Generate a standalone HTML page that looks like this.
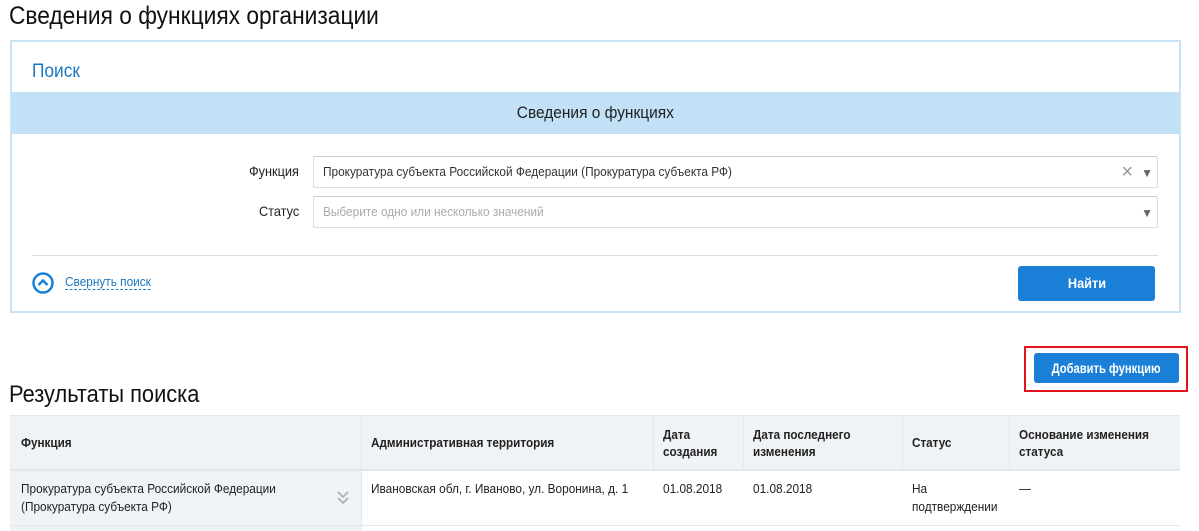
<!DOCTYPE html>
<html><head><meta charset="utf-8"><style>
*{box-sizing:border-box;margin:0;padding:0}
body{width:1199px;height:531px;overflow:hidden;background:#fff;font-family:"Liberation Sans",sans-serif;color:#222;position:relative}
.a{position:absolute}
.x{transform:scaleX(.91);transform-origin:left top;white-space:nowrap}
.s{display:inline-block;transform:scaleX(.91);transform-origin:left center;white-space:nowrap}
.h{font-size:13px;font-weight:bold;line-height:17px;transform:scaleX(.9);transform-origin:left top;white-space:nowrap}
.b{font-size:13px;line-height:18px;transform:scaleX(.91);transform-origin:left top;white-space:nowrap}
</style></head><body>
<div class="a x" style="left:9px;top:2px;font-size:25px;color:#111">Сведения о функциях организации</div>
<div class="a" style="left:10px;top:40px;width:1171px;height:273px;border:2px solid #c8e2f6"></div>
<div class="a x" style="left:32px;top:61px;font-size:19px;color:#1a77c2">Поиск</div>
<div class="a" style="left:12px;top:92px;width:1167px;height:42px;background:#c2e0f6;text-align:center;line-height:42px;font-size:17px;color:#222"><span class="s" style="transform-origin:center">Сведения о функциях</span></div>
<div class="a" style="left:200px;top:163px;width:99px;text-align:right;font-size:14px"><span class="s" style="transform-origin:right center">Функция</span></div>
<div class="a" style="left:313px;top:156px;width:845px;height:32px;border:1px solid #ddd;border-top-color:#ccc;border-radius:2px;font-size:13px;line-height:30px;padding-left:9px;color:#333"><span class="s">Прокуратура субъекта Российской Федерации (Прокуратура субъекта РФ)</span>
<span class="a" style="right:24px;top:0;color:#999;font-size:20px">×</span><span class="a" style="right:4px;top:1px;color:#666;font-size:12px">▼</span></div>
<div class="a" style="left:200px;top:203px;width:99px;text-align:right;font-size:14px"><span class="s" style="transform-origin:right center">Статус</span></div>
<div class="a" style="left:313px;top:196px;width:845px;height:32px;border:1px solid #ddd;border-top-color:#ccc;border-radius:2px;font-size:13px;line-height:30px;padding-left:9px;color:#aaa"><span class="s">Выберите одно или несколько значений</span><span class="a" style="right:4px;top:1px;color:#666;font-size:12px">▼</span></div>
<div class="a" style="left:32px;top:255px;width:1126px;height:1px;background:#ddd"></div>
<svg class="a" style="left:32px;top:272px" width="22" height="22"><circle cx="11" cy="11" r="9.5" fill="none" stroke="#1a7fd6" stroke-width="2.5"/><path d="M6.5 13 L11 8.5 L15.5 13" fill="none" stroke="#1a7fd6" stroke-width="2.5"/></svg>
<div class="a x" style="left:65px;top:274px;font-size:13px;color:#1a77c2;border-bottom:1px dashed #1a77c2;line-height:15px">Свернуть поиск</div>
<div class="a" style="left:1018px;top:266px;width:137px;height:35px;background:#1a7fd6;border-radius:3px;color:#fff;font-size:14px;font-weight:bold;text-align:center;line-height:35px"><span class="s" style="transform-origin:center">Найти</span></div>
<div class="a" style="left:1024px;top:346px;width:164px;height:46px;border:2px solid #e3141e"></div>
<div class="a" style="left:1034px;top:353px;width:145px;height:30px;background:#1a7fd6;border-radius:3px;color:#fff;font-size:14px;font-weight:bold;text-align:center;line-height:30px"><span class="s" style="transform-origin:center;transform:scaleX(.8)">Добавить функцию</span></div>
<div class="a x" style="left:9px;top:381px;font-size:24px;color:#111">Результаты поиска</div>
<div class="a" style="left:10px;top:415px;width:1170px;height:56px;background:#f0f3f6;border-top:1px solid #e3e6ea;border-bottom:2px solid #e3e6ea"></div>
<div class="a" style="left:10px;top:471px;width:351px;height:60px;background:#f0f3f6"></div>
<div class="a" style="left:361px;top:415px;width:1px;height:116px;background:#e3e6ea"></div>
<div class="a" style="left:653px;top:415px;width:1px;height:56px;background:#e3e6ea"></div>
<div class="a" style="left:743px;top:415px;width:1px;height:56px;background:#e3e6ea"></div>
<div class="a" style="left:902px;top:415px;width:1px;height:56px;background:#e3e6ea"></div>
<div class="a" style="left:1009px;top:415px;width:1px;height:56px;background:#e3e6ea"></div>
<div class="a" style="left:361px;top:525px;width:819px;height:1px;background:#e3e6ea"></div>
<div class="a" style="left:10px;top:525px;width:351px;height:1px;background:#e3e6ea"></div>
<div class="a h" style="left:21px;top:434px">Функция</div>
<div class="a h" style="left:371px;top:434px">Административная территория</div>
<div class="a h" style="left:663px;top:426px">Дата<br>создания</div>
<div class="a h" style="left:753px;top:426px">Дата последнего<br>изменения</div>
<div class="a h" style="left:912px;top:434px">Статус</div>
<div class="a h" style="left:1019px;top:426px">Основание изменения<br>статуса</div>
<div class="a b" style="left:21px;top:480px">Прокуратура субъекта Российской Федерации<br>(Прокуратура субъекта РФ)</div>
<svg class="a" style="left:336px;top:490px" width="14" height="16"><path d="M2 2 L7 7 L12 2 M2 8 L7 13 L12 8" fill="none" stroke="#aab2bb" stroke-width="1.8"/></svg>
<div class="a b" style="left:371px;top:480px">Ивановская обл, г. Иваново, ул. Воронина, д. 1</div>
<div class="a b" style="left:663px;top:480px">01.08.2018</div>
<div class="a b" style="left:753px;top:480px">01.08.2018</div>
<div class="a b" style="left:912px;top:480px">На<br>подтверждении</div>
<div class="a b" style="left:1019px;top:480px">—</div>
</body></html>
